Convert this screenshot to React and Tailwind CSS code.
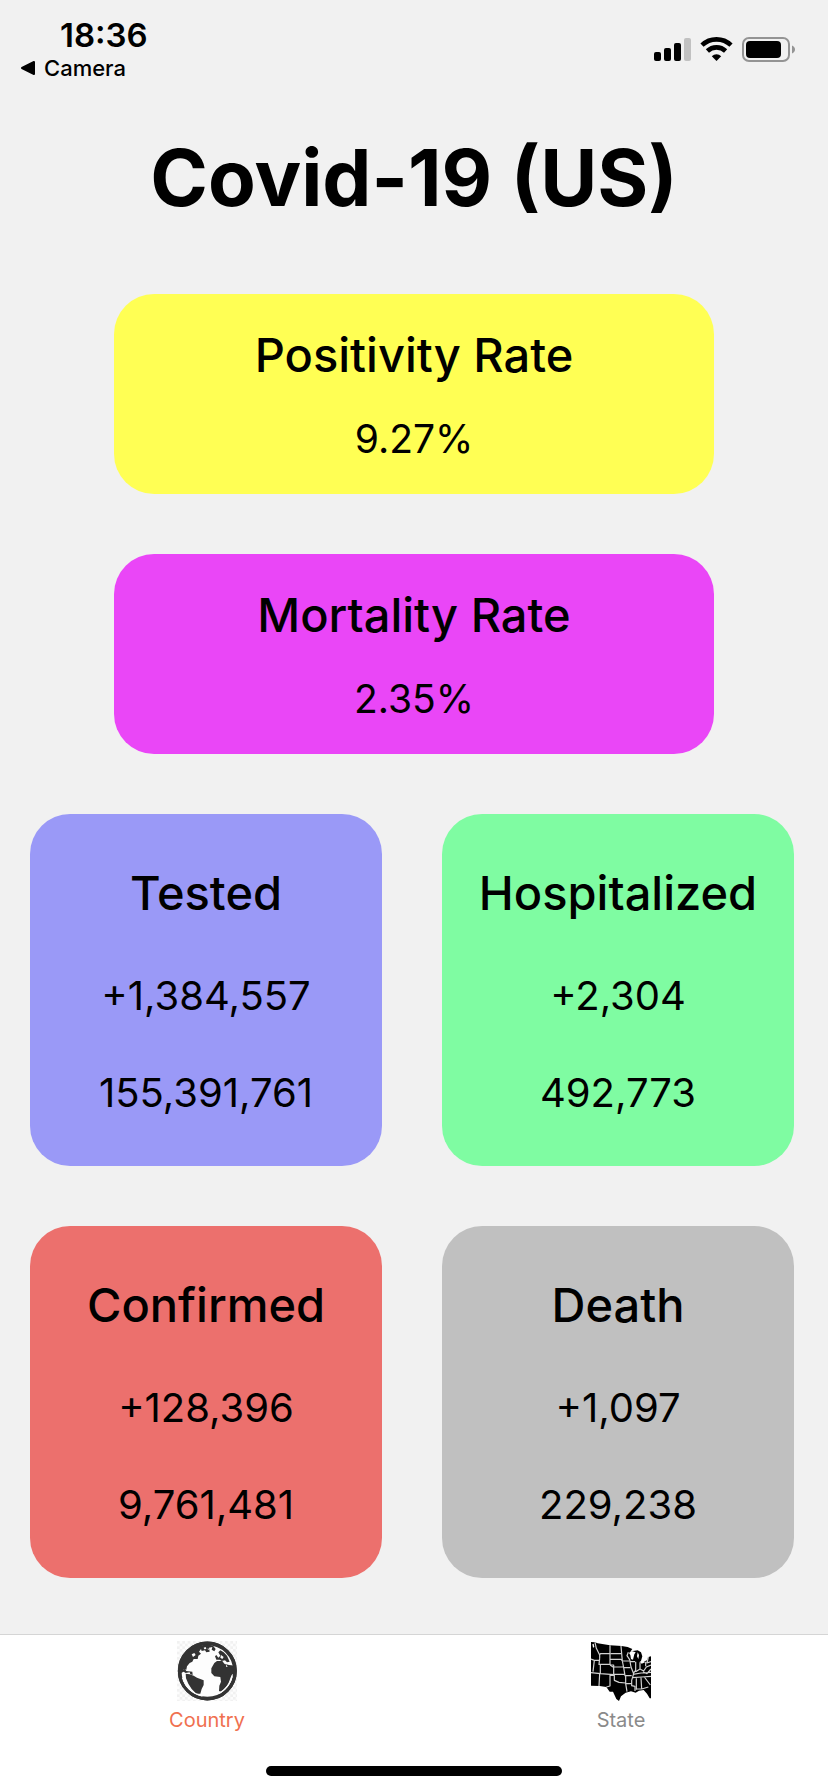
const rates = [
  { title: "Positivity Rate", value: "9.27%", color: "bg-[#ffff54]" },
  { title: "Mortality Rate", value: "2.35%", color: "bg-[#ea46f7]" },
];

const counts = [
  { title: "Tested", change: "+1,384,557", total: "155,391,761", color: "bg-[#9a99f7]" },
  { title: "Hospitalized", change: "+2,304", total: "492,773", color: "bg-[#7ffca2]" },
  { title: "Confirmed", change: "+128,396", total: "9,761,481", color: "bg-[#ec706d]" },
  { title: "Death", change: "+1,097", total: "229,238", color: "bg-[#c0c0c0]" },
];

function StatusIcons() {
  return (
    <svg width="142" height="26" viewBox="0 0 142 26" role="img" aria-label="Signal, Wi-Fi and battery">
      <rect x="0" y="15" width="7" height="9" rx="2" />
      <rect x="10" y="11" width="7" height="13" rx="2" />
      <rect x="20" y="6" width="7" height="18" rx="2" />
      <rect x="30" y="1" width="7" height="23" rx="2" fill="#c1c1c1" />
      <g fill="none" stroke="#000" strokeWidth="4.6">
        <path d="M48 8.2A21 21 0 0 1 77 8.2" />
        <path d="M53.4 14A13.2 13.2 0 0 1 71.6 14" />
      </g>
      <path d="M62.5 24L57.8 19.2a6.8 6.8 0 0 1 9.4 0Z" />
      <rect x="89" y="1" width="46" height="23" rx="6" fill="none" stroke="#949494" strokeWidth="2" />
      <rect x="92" y="4" width="35" height="17" rx="4" />
      <path d="M138 8.500c4 1.500 4 6.500 0 8Z" fill="#949494" />
    </svg>
  );
}

function GlobeIcon() {
  return (
    <svg width="60" height="60" viewBox="0 0 180 180" aria-hidden="true">
      <defs>
        <pattern id="checks" width="16" height="16" patternUnits="userSpaceOnUse">
          <rect width="16" height="16" fill="#fdfdfd" />
          <path d="M0 0h8v8H0zM8 8h8v8H8z" fill="#f1f1f1" />
        </pattern>
      </defs>
      <rect width="180" height="180" fill="url(#checks)" />
      <circle cx="91" cy="90" r="83" fill="#fdfdfd" stroke="#333" strokeWidth="11" />
      <g fill="#333">
        <path d="M20 48L38 28L60 16L92 10L108 14L116 24L112 31L104 26L106 18L96 20L98 32L88 34L84 28L74 30L72 24L66 32L72 38L64 44L62 54L50 54L46 62L38 66L30 76L28 86L20 84L12 96L10 80Z" />
        <path d="M10 86L24 84L28 90L46 92L47 102L40 100L38 94L26 96L20 92L12 96Z" />
        <path d="M26 98L38 100L50 104L60 110L80 118L80 132L74 144L70 158L58 158L44 144L34 128L27 112Z" />
        <path d="M112 66L120 60L136 60L142 68L156 72L176 74L175 92L164 102L160 112L154 128L144 142L132 152L126 150L127 134L132 122L130 108L112 106L103 96L103 82Z" />
        <path d="M124 34L130 28L140 34L150 44L158 62L150 64L144 58L134 60L128 56L118 56L114 46L118 42L124 50L130 44Z" />
      </g>
      <g fill="#fdfdfd">
        <path d="M44 40L52 36L56 42L48 48ZM80 20L86 18L88 24L82 25ZM132 42L140 48L136 54L130 50ZM146 68L152 78L148 78ZM92 22L96 24L93 28Z" />
      </g>
      <path d="M16 110C24 138 46 158 76 165M166 106C160 128 146 146 126 157" fill="none" stroke="#fdfdfd" strokeWidth="4" />
      <circle cx="91" cy="90" r="84" fill="none" stroke="#333" strokeWidth="9" />
    </svg>
  );
}

function StatesIcon() {
  return (
    <svg width="60" height="60" viewBox="0 0 180 180" aria-hidden="true">
      <path d="M0 3L12 4L20 7L57 13L92 15L110 18L124 24L118 32L126 30L140 28L150 34L154 46L150 60L158 62L168 58L172 48L180 46V172L176 172L168 158L158 147L144 149L134 155L120 151L104 155L90 166L84 180L76 174L66 152L56 152L46 138L26 135L0 134Z" />
      <path d="M114 36L122 30L134 34L130 40L126 56L120 54L118 42ZM140 34L144 42L142 54L138 46ZM146 62L156 58L162 64L152 68Z" fill="#fff" />
      <path d="M4 10L8 8L10 18L6 20Z" fill="#fff" />
      <g fill="none" stroke="#d2d2d2" strokeWidth="3.6" strokeLinejoin="round">
        <path d="M12 4L16 22L26 42L26 52M0 54L10 58H26M10 58L6 92M26 42L28 38H57M26 52L24 70H57V13M57 38V72M28 70V98M0 95L28 98L68 101V72H57" />
        <path d="M26 98L24 135M57 101V135L46 138M57 103H70V118L84 124L104 126M68 100H100M58 38H90M57 55H90L96 62M57 72L66 78H98M90 15L92 38L94 60H116M94 60L98 80H118M98 80L102 104H122" />
        <path d="M104 104V128H122M104 128L108 152M112 34L108 44L116 56L120 78L128 98L122 118L122 134L132 136V150M116 62H132M134 62V88L126 98M147 64V84L134 92M147 84L158 90L166 78L180 72M164 62V76M172 48L168 66L180 62" />
        <path d="M126 100L150 96L180 94M124 110L152 108L180 106M136 112V146M150 110L152 144M160 108L178 132M156 92L168 98L180 84M134 144H152L172 138" />
      </g>
    </svg>
  );
}

function RateCard({ title, value, color }) {
  return (
    <section className={`flex h-[200px] w-full max-w-[600px] flex-col items-center justify-evenly rounded-[40px] ${color}`}>
      <h2 className="text-[47px] leading-[60px] font-medium">{title}</h2>
      <p className="text-[39px] leading-[48px]">{value}</p>
    </section>
  );
}

function CountCard({ title, change, total, color }) {
  return (
    <section className={`flex aspect-square flex-col items-center justify-evenly rounded-[40px] ${color}`}>
      <h2 className="text-[47px] leading-[60px] font-medium">{title}</h2>
      <p className="text-[40px] leading-[48px]">{change}</p>
      <p className="text-[40px] leading-[48px]">{total}</p>
    </section>
  );
}

export default function App() {
  return (
    <div className="flex min-h-screen flex-col bg-[#f1f1f1] font-['Inter',sans-serif] text-black">
      <header className="flex items-start justify-between pt-4 pr-8">
        <div>
          <div className="pl-[60px] text-[33px] leading-[38px] font-semibold">18:36</div>
          <a href="#camera" className="flex items-center gap-2 pl-5 text-[22px] leading-7 font-medium">
            <svg width="16" height="16" viewBox="0 0 16 16" aria-hidden="true">
              <path d="M2 8L14 2V14Z" stroke="#000" strokeWidth="2" strokeLinejoin="round" />
            </svg>
            Camera
          </a>
        </div>
        <div className="pt-[21px]">
          <StatusIcons />
        </div>
      </header>

      <main className="flex flex-1 flex-col items-center gap-[60px] pt-12 pb-14">
        <h1 className="pb-2 text-[78px] leading-[96px] font-bold">Covid-19 (US)</h1>
        {rates.map((r) => (
          <RateCard key={r.title} {...r} />
        ))}
        <div className="grid w-full grid-cols-2 gap-[60px] pr-[34px] pl-[30px]">
          {counts.map((c) => (
            <CountCard key={c.title} {...c} />
          ))}
        </div>
      </main>

      <footer className="border-t border-[#d5d5d5] bg-white pt-[6px] pb-4">
        <nav className="grid grid-cols-2">
          <a href="#country" aria-current="page" className="flex flex-col items-center gap-[7px] text-[20px] leading-6 text-[#f0704f]">
            <GlobeIcon />
            Country
          </a>
          <a href="#state" className="flex flex-col items-center gap-[7px] text-[20px] leading-6 text-[#8a8a8a]">
            <StatesIcon />
            State
          </a>
        </nav>
        <div className="mx-auto mt-[34px] h-[10px] w-[296px] rounded-full bg-black" />
      </footer>
    </div>
  );
}
